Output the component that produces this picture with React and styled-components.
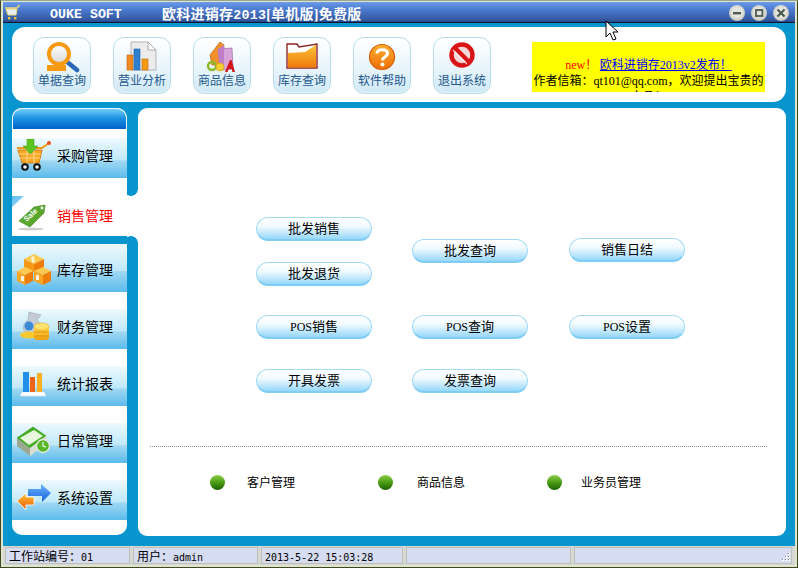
import React from "react";
import styled, { createGlobalStyle } from "styled-components";

const Global = createGlobalStyle`
  html, body { margin: 0; padding: 0; background: #fff; }
  #root { width: 798px; height: 568px; }
`;
const CJK = `"Noto Sans CJK SC", "Liberation Sans", sans-serif`;
const BLUE = "#0996cf";

const Window = styled.div`
  position: relative; box-sizing: border-box; width: 798px; height: 568px; overflow: hidden;
  display: flex; flex-direction: column; padding: 1px 2px 2px;
  background: #dfe3d0; border: 1px solid #3d4a20; border-top-color: #9aa88a; font-family: ${CJK}; font-size: 12px; color: #000;
`;
const Mono = styled.span`
  font-family: "DejaVu Sans Mono", monospace; font-size: 10px; line-height: 0;
`;
const Roman = styled.span`
  font-family: "Liberation Serif", serif; font-size: ${p => p.$size || 12}px; line-height: 0; font-weight: ${p => p.$bold ? 700 : "inherit"};
`;
const BrandText = styled.span`
  font-family: "Liberation Mono", monospace; font-weight: 700; line-height: 0; font-size: ${p => p.$size}px;
`;
const TitleBar = styled.header`
  display: flex; align-items: center; height: 21px; flex: none; padding: 0 6px 0 1px; box-sizing: border-box;
  background: linear-gradient(#6d9be8 0%, #4f7fd6 30%, #33599f 85%, #2a4a90 93%, #0d1830 95%);
  color: #fff;
`;
const TitleLogo = styled.span` display: flex; width: 17px; height: 17px; `;
const Brand = styled.span` margin-left: 29px; width: 112px; `;
const TitleText = styled.span` font-size: 14px; font-weight: 700; letter-spacing: .25px; `;
const Controls = styled.div` margin-left: auto; display: flex; gap: 6px; `;
const WinBtn = styled.span`
  width: 16px; height: 16px; border-radius: 50%; display: flex; align-items: center; justify-content: center;
  background: radial-gradient(circle at 50% 45%, #e6e6e0 40%, #b9bbb8 80%, #8e96a8 100%);
`;
const Body = styled.main`
  flex: 1; min-height: 0; background: ${BLUE}; padding: 4px 9px 10px; display: flex; flex-direction: column; gap: 6px;
`;
const Toolbar = styled.section`
  height: 75px; flex: none; background: #fff; border-radius: 13px; display: flex; padding: 10px 21px 0; box-sizing: border-box; gap: 22px;
`;
const ToolButton = styled.button`
  width: 58px; height: 57px; box-sizing: border-box; padding: 1px 0 0; border: 1px solid #b5dbec; border-radius: 11px;
  background: linear-gradient(#ffffff, #e9f5fc 55%, #cfe8f6);
  box-shadow: inset 0 -1px 1px #e8f4fa; display: flex; flex-direction: column; align-items: center;
  font: 12px/15px ${CJK}; color: #24598c;
`;
const ToolIcon = styled.svg` width: 36px; height: 34px; flex: none; margin-bottom: -1px; `;
const Notice = styled.div`
  margin: 5px 0 0 auto; width: 233px; height: 50px; box-sizing: border-box; padding-top: 14px; overflow: hidden;
  background: #ff0; text-align: center; line-height: 16px; white-space: normal;
`;
const Red = styled.span` color: #f00; `;
const NoticeLink = styled.a` color: #00f; text-decoration: underline; `;
const Row = styled.div` flex: 1; min-height: 0; display: flex; `;
const Sidebar = styled.nav` width: 126px; flex: none; display: flex; flex-direction: column; `;
const SideBlock = styled.div`
  position: relative; width: 115px; height: ${p => p.$h}px; margin-top: ${p => p.$mt || 0}px; background: #fff; display: flex; flex-direction: column;
  border-radius: ${p => p.$top ? "10px 10px 0 0" : "0 0 10px 10px"};
  &::after {
    content: ""; position: absolute; left: 115px; width: 11px; height: 7px;
    ${p => p.$top ? "bottom: 0;" : "top: -8px;"}
    background: ${p => p.$top
      ? `radial-gradient(circle at 4px 0, ${BLUE} 6.5px, #fff 7.2px)`
      : `radial-gradient(circle at 4px 7px, ${BLUE} 6.5px, #fff 7.2px)`};
  }
`;
const Cap = styled.div`
  height: 21px; flex: none; box-sizing: border-box; border: 1px solid #e8f7ff; border-bottom: 0; border-radius: 10px 10px 0 0;
  background: linear-gradient(#74cdf6, #1d94e4 45%, #0060c8);
`;
const SideItem = styled.a`
  display: flex; align-items: center; flex: none; box-sizing: border-box; height: ${p => p.$h}px; margin-top: ${p => p.$mt}px;
  padding: ${p => p.$h === 48 ? "4px 0 0 4px" : "0 0 4px 4px"};
  background: linear-gradient(#eef9fe, #bfe8f9 55%, #a0d8f2 57%, #5cbbec);
  font-size: 14px; color: #000;
`;
const SideLabel = styled.span` margin-bottom: 2px; `;
const SideIconBox = styled.svg` width: 36px; height: 34px; flex: none; margin-right: 5px; `;
const ActiveTab = styled(SideItem)`
  position: relative; width: 126px; background: #fff; color: #f00; padding: 0 0 0 4px;
  &::before {
    content: ""; position: absolute; left: 0; top: 0; width: 12px; height: 11px;
    background: linear-gradient(135deg, #5cbbec, #a8dcf5); clip-path: polygon(0 0, 100% 0, 0 100%);
  }
`;
const MainPanel = styled.section`
  flex: 1; min-width: 0; background: #fff; border-radius: 9px; padding: 0 19px 0 12px;
`;
const ButtonGrid = styled.div`
  margin: 109px 0 0 106px; display: grid; grid-template-columns: 156px 157px 116px; grid-template-rows: 98px 54px 24px;
`;
const Stack = styled.div` display: flex; flex-direction: column; gap: 21px; margin-top: ${p => p.$mt || 0}px; `;
const PillButton = styled.button`
  width: 116px; height: 24px; padding: 0 0 2px; box-sizing: border-box; border: 1px solid #a2daf6; border-bottom: 2px solid #7fcdf5; border-radius: 12px;
  background: linear-gradient(#ffffff 5%, #f0faff 40%, #98d8fa 100%);
  font: 13px/18px ${CJK}; color: #000;
`;
const Divider = styled.hr`
  margin: 53px 0 0; border: 0; border-top: 1px dotted #8f8f8f; height: 0;
`;
const Links = styled.div`
  margin-top: 28px; padding-left: 60px; display: grid; grid-template-columns: 168px 169px auto;
`;
const LinkItem = styled.a` display: flex; align-items: center; gap: ${p => p.$gap}px; height: 15px; `;
const LinkLabel = styled.span` margin-bottom: 2px; `;
const Dot = styled.span`
  width: 15px; height: 15px; border-radius: 50%;
  background: linear-gradient(#8ccf4a, #4a9c14 50%, #1d6304);
`;
const StatusBar = styled.footer`
  height: 19px; flex: none; box-sizing: border-box; padding: 1px 3px 1px 2px; display: flex; gap: 3px; background: #d8d8d2;
`;
const StatusCell = styled.div`
  position: relative; width: ${p => p.$w ? p.$w + "px" : "auto"}; flex: ${p => p.$w ? "none" : 1}; box-sizing: border-box;
  border: 1px solid #bfc0b8; background: #d6dcf1; padding-left: 3px; line-height: 15px; white-space: nowrap; overflow: hidden;
`;
const Grip = styled.svg` position: absolute; right: 0; bottom: 0; width: 12px; height: 12px; `;
const Cursor = styled.svg` position: absolute; left: 604px; top: 19px; width: 15px; height: 22px; `;

const Grad = ({ id, from, to }) => (
  <linearGradient id={id} x1="0" y1="0" x2="0" y2="1"><stop offset="0" stopColor={from} /><stop offset="1" stopColor={to} /></linearGradient>
);

const MagnifierIcon = () => (
  <ToolIcon viewBox="0 0 36 34">
    <defs><Grad id="lens" from="#fff" to="#d8d8d8" /></defs>
    <line x1="22" y1="22" x2="33" y2="31" stroke="#2b68b8" strokeWidth="4.5" strokeLinecap="round" />
    <circle cx="15" cy="15" r="10" fill="url(#lens)" stroke="#f59a12" strokeWidth="4" />
    <rect x="3" y="26" width="19" height="6" fill="#f59a12" />
  </ToolIcon>
);
const ReportIcon = () => (
  <ToolIcon viewBox="0 0 36 34">
    <polygon points="7,3 24,3 32,11 32,31 7,31" fill="#ececec" stroke="#b5b5b5" />
    <polygon points="24,3 32,11 24,11" fill="#fff" stroke="#aaa" />
    <rect x="3" y="16" width="6" height="15" fill="#f08a20" stroke="#b8651a" strokeWidth=".6" />
    <rect x="10" y="10" width="6" height="21" fill="#2f7fd0" stroke="#1f5fa8" strokeWidth=".6" />
    <rect x="18" y="20" width="6" height="11" fill="#f59a12" stroke="#b8651a" strokeWidth=".6" />
  </ToolIcon>
);
const BooksIcon = () => (
  <ToolIcon viewBox="0 0 36 34">
    <polygon points="6,16 16,3 20,6 20,26 8,26" fill="#f2912a" stroke="#b9651a" strokeWidth=".7" />
    <polygon points="14,10 28,9 29,30 16,31" fill="#d9a4d8" stroke="#a06aa8" strokeWidth=".7" />
    <polygon points="14,10 20,6 20,26 16,31" fill="#c07fc4" />
    <circle cx="8" cy="27" r="4" fill="none" stroke="#8cb82a" strokeWidth="2.4" />
    <ellipse cx="16" cy="28" rx="4" ry="4" fill="#f5cf30" stroke="#d09a10" strokeWidth=".6" />
    <polygon points="21,33 26,21 27.5,21 31,33 28.5,33 27.6,30 24.6,30 23.5,33" fill="#d01616" />
  </ToolIcon>
);
const FolderIcon = () => (
  <ToolIcon viewBox="0 0 36 34">
    <defs><Grad id="fold" from="#fbc23a" to="#ef7a0a" /></defs>
    <polygon points="3,5 13,5 15,8 33,5 33,29 3,29" fill="#fff" stroke="#8e2424" strokeWidth="1.4" />
    <polygon points="4,14 21,13 32,6 32,28.5 4,28.5" fill="url(#fold)" />
  </ToolIcon>
);
const HelpIcon = () => (
  <ToolIcon viewBox="0 0 36 34">
    <defs><Grad id="help" from="#fcb030" to="#ee6e08" /></defs>
    <circle cx="18" cy="18" r="12.5" fill="url(#help)" stroke="#d85c04" strokeWidth="1.2" />
    <path d="M13 14.5 C13 9.5 23.5 9.5 23.5 14.5 C23.5 18 18.5 17.5 18.5 21.5" fill="none" stroke="#fff" strokeWidth="3.2" />
    <circle cx="18.5" cy="25.5" r="2" fill="#fff" />
  </ToolIcon>
);
const ExitIcon = () => (
  <ToolIcon viewBox="0 0 36 34">
    <circle cx="18" cy="16" r="10.5" fill="#f3d6d6" stroke="#d81414" strokeWidth="4.4" />
    <line x1="10.5" y1="8.5" x2="25.5" y2="23.5" stroke="#d81414" strokeWidth="4.4" />
    <line x1="9" y1="11" x2="23" y2="25" stroke="#fff" strokeWidth="1.2" opacity=".8" />
  </ToolIcon>
);

const CartIcon = () => (
  <SideIconBox viewBox="0 0 36 34">
    <path d="M1 9 H26 L33 4" fill="none" stroke="#f09a1c" strokeWidth="2" />
    <circle cx="33" cy="4" r="2" fill="#e8501c" />
    <polygon points="2,11 26,11 23,24 6,24" fill="#f7a626" stroke="#d87a0c" />
    <path d="M3 15 H25 M4 19 H24 M11 11 V24 M18 11 V24" stroke="#ffd680" fill="none" strokeWidth="1.1" />
    <polygon points="11,0 18,0 18,7 22,7 14.5,15 7,7 11,7" fill="#5cc41e" stroke="#3f9a10" strokeWidth=".5" />
    <circle cx="9" cy="28" r="2.8" fill="#fff" stroke="#111" strokeWidth="2" />
    <circle cx="21" cy="28" r="2.8" fill="#fff" stroke="#111" strokeWidth="2" />
  </SideIconBox>
);
const SaleIcon = () => (
  <SideIconBox viewBox="0 0 36 34">
    <ellipse cx="15" cy="30" rx="13" ry="1.4" fill="#cfcfcf" />
    <polygon points="3,22 18,8 29,6 28,14 14,28" fill="#59a72d" stroke="#3f8a1a" strokeWidth=".6" />
    <circle cx="26" cy="9" r="1.4" fill="#fff" />
    <text x="0" y="0" transform="translate(10.5 23) rotate(-42)" fontFamily="Liberation Sans" fontWeight="700" fontSize="7.5" fill="#fff">Sale</text>
  </SideIconBox>
);
const BoxesIcon = () => (
  <SideIconBox viewBox="0 0 36 34">
    <polygon points="18,1 28,6 18,11 8,6" fill="#fcc850" />
    <polygon points="8,6 18,11 18,19 8,14" fill="#f59a18" />
    <polygon points="28,6 18,11 18,19 28,14" fill="#ee7e0c" />
    <polygon points="9,14 18,18 9,22 1,18" fill="#fcc850" />
    <polygon points="1,18 9,22 9,32 1,28" fill="#f7a626" />
    <polygon points="17,18 9,22 9,32 17,28" fill="#ee7e0c" />
    <polygon points="27,14 35,18 27,22 18,18" fill="#fcc850" />
    <polygon points="18,18 27,22 27,32 18,28" fill="#f7a626" />
    <polygon points="35,18 27,22 27,32 35,28" fill="#ee7e0c" />
    <rect x="5" y="23" width="3" height="5" fill="#fff" opacity=".85" />
    <rect x="20" y="22" width="3" height="5" fill="#fff" opacity=".85" />
    <polygon points="15,4 18,3 19,9 16,10" fill="#fff" opacity=".7" />
  </SideIconBox>
);
const CoinsIcon = () => (
  <SideIconBox viewBox="0 0 36 34">
    <defs><Grad id="coin" from="#ffd84a" to="#f0a010" /></defs>
    <path d="M13 2 L25 5 L21 10 C26 13 22 22 14 23 C6 23 5 15 12 10 Z" fill="#c6ccd6" stroke="#9aa4b0" strokeWidth=".6" />
    <circle cx="13" cy="16" r="4.5" fill="#3a8ad8" />
    <ellipse cx="13" cy="25" rx="9" ry="3.5" fill="#f9c82e" />
    <rect x="18" y="17" width="15" height="13" rx="3" fill="url(#coin)" />
    <ellipse cx="25.5" cy="16.5" rx="7.5" ry="3.5" fill="#ffe370" stroke="#e8a810" strokeWidth=".6" />
    <path d="M18 22 H33 M18 26 H33" stroke="#d88c08" strokeWidth=".8" />
  </SideIconBox>
);
const BarsIcon = () => (
  <SideIconBox viewBox="0 0 36 34">
    <polygon points="6,25 28,25 30,29 4,29" fill="#fff" stroke="#d8e4ea" strokeWidth=".6" />
    <rect x="7" y="5" width="6" height="20" fill="#2290ea" />
    <rect x="14" y="10" width="5" height="15" fill="#ee6418" />
    <rect x="21" y="6" width="5" height="19" fill="#fbb022" />
  </SideIconBox>
);
const CalendarIcon = () => (
  <SideIconBox viewBox="0 0 36 34">
    <polygon points="1,14 17,3 30,12 14,24" fill="#44b020" stroke="#2e8a10" strokeWidth=".6" />
    <polygon points="4,14 18,6 27,12 13,21" fill="#e8f6e0" />
    <polygon points="1,14 14,24 14,32 1,22" fill="#9aa890" />
    <polygon points="14,24 30,12 30,20 14,32" fill="#d8ded0" />
    <circle cx="27" cy="22" r="6.5" fill="#58b828" stroke="#dfe8e0" strokeWidth="1.4" />
    <path d="M27 18 V22 L30 23" stroke="#fff" fill="none" strokeWidth="1.1" />
  </SideIconBox>
);
const ArrowsIcon = () => (
  <SideIconBox viewBox="0 0 36 34">
    <defs><Grad id="arrB" from="#6ab4fa" to="#1a62e0" /><Grad id="arrO" from="#fcc030" to="#ee5c0c" /></defs>
    <polygon points="12,8 25,8 25,3 35,12 26,21 26,15 12,15" fill="url(#arrB)" />
    <polygon points="18,16 18,24 10,24 10,29 1,20 10,12 10,16" fill="url(#arrO)" stroke="#fff" strokeWidth=".8" />
  </SideIconBox>
);

const TOOLS = [
  ["单据查询", MagnifierIcon], ["营业分析", ReportIcon], ["商品信息", BooksIcon],
  ["库存查询", FolderIcon], ["软件帮助", HelpIcon], ["退出系统", ExitIcon],
];
const LOWER = [
  ["财务管理", CoinsIcon, 40, 17], ["统计报表", BarsIcon, 40, 17],
  ["日常管理", CalendarIcon, 40, 17], ["系统设置", ArrowsIcon, 40, 17],
];

export default function App() {
  return (
    <Window>
      <Global />
      <TitleBar>
        <TitleLogo>
          <svg viewBox="0 0 17 17" width="17" height="17">
            <path d="M1 4 H13 L15.5 1" fill="none" stroke="#f0d878" strokeWidth="1.4" />
            <polygon points="2,5 13,5 12,11 4,11" fill="#e8eef0" stroke="#f0d878" />
            <rect x="4" y="13" width="2.4" height="2.4" fill="#f0c830" />
            <rect x="10" y="13" width="2.4" height="2.4" fill="#f0c830" />
          </svg>
        </TitleLogo>
        <Brand><BrandText $size={13.3}>OUKE SOFT</BrandText></Brand>
        <TitleText>欧科进销存<BrandText $size={13.3}>2013</BrandText><Roman $size={14} $bold>[</Roman>单机版<Roman $size={14} $bold>]</Roman>免费版</TitleText>
        <Controls>
          <WinBtn><svg width="10" height="10" viewBox="0 0 10 10"><rect x="1" y="4" width="8" height="2.4" fill="#4c5a50" /></svg></WinBtn>
          <WinBtn><svg width="10" height="10" viewBox="0 0 10 10"><rect x="2" y="2" width="6.4" height="6" fill="none" stroke="#4c5a50" strokeWidth="1.8" /></svg></WinBtn>
          <WinBtn><svg width="10" height="10" viewBox="0 0 10 10"><path d="M1.5 1.5 L8.5 8.5 M8.5 1.5 L1.5 8.5" stroke="#4c5a50" strokeWidth="2.2" /></svg></WinBtn>
        </Controls>
      </TitleBar>
      <Body>
        <Toolbar>
          {TOOLS.map(([label, Icon]) => (
            <ToolButton key={label}><Icon />{label}</ToolButton>
          ))}
          <Notice>
            <Red><Roman>new</Roman>！</Red>{" "}
            <NoticeLink>欧科进销存<Roman>2013v2</Roman>发布！ </NoticeLink>
            <br />
            作者信箱：<Roman>qt101@qq.com</Roman>，欢迎提出宝贵的
            产品！
          </Notice>
        </Toolbar>
        <Row>
          <Sidebar>
            <SideBlock $top $h={88}>
              <Cap />
              <SideItem $h={40} $mt={9}><CartIcon /><SideLabel>采购管理</SideLabel></SideItem>
            </SideBlock>
            <ActiveTab $h={40} $mt={0}><SaleIcon /><SideLabel>销售管理</SideLabel></ActiveTab>
            <SideBlock $h={291} $mt={8}>
              <SideItem $h={48} $mt={0}><BoxesIcon /><SideLabel>库存管理</SideLabel></SideItem>
              {LOWER.map(([label, Icon, h, mt]) => (
                <SideItem key={label} $h={h} $mt={mt}><Icon /><SideLabel>{label}</SideLabel></SideItem>
              ))}
            </SideBlock>
          </Sidebar>
          <MainPanel>
            <ButtonGrid>
              <Stack>
                <PillButton>批发销售</PillButton>
                <PillButton>批发退货</PillButton>
              </Stack>
              <Stack $mt={22}><PillButton>批发查询</PillButton></Stack>
              <Stack $mt={21}><PillButton>销售日结</PillButton></Stack>
              <PillButton><Roman>POS</Roman>销售</PillButton>
              <PillButton><Roman>POS</Roman>查询</PillButton>
              <PillButton><Roman>POS</Roman>设置</PillButton>
              <PillButton>开具发票</PillButton>
              <PillButton>发票查询</PillButton>
            </ButtonGrid>
            <Divider />
            <Links>
              <LinkItem $gap={22}><Dot /><LinkLabel>客户管理</LinkLabel></LinkItem>
              <LinkItem $gap={24}><Dot /><LinkLabel>商品信息</LinkLabel></LinkItem>
              <LinkItem $gap={19}><Dot /><LinkLabel>业务员管理</LinkLabel></LinkItem>
            </Links>
          </MainPanel>
        </Row>
      </Body>
      <StatusBar>
        <StatusCell $w={125}>工作站编号：<Mono>01</Mono></StatusCell>
        <StatusCell $w={125}>用户：<Mono>admin</Mono></StatusCell>
        <StatusCell $w={142}><Mono>2013-5-22 15:03:28</Mono></StatusCell>
        <StatusCell $w={165} />
        <StatusCell>
          <Grip viewBox="0 0 12 12">
            <path d="M9 2h2v2h-2z M6 5h2v2h-2z M9 5h2v2h-2z M3 8h2v2h-2z M6 8h2v2h-2z M9 8h2v2h-2z" fill="#fff" />
            <path d="M9 2h1v1h-1z M6 5h1v1h-1z M9 5h1v1h-1z M3 8h1v1h-1z M6 8h1v1h-1z M9 8h1v1h-1z" fill="#8a8a8a" />
          </Grip>
        </StatusCell>
      </StatusBar>
      <Cursor viewBox="0 0 15 22">
        <polygon points="1,1 1,17 5,13 8,20 11,19 8,12 13,12" fill="#fff" stroke="#000" strokeWidth="1" />
      </Cursor>
    </Window>
  );
}
